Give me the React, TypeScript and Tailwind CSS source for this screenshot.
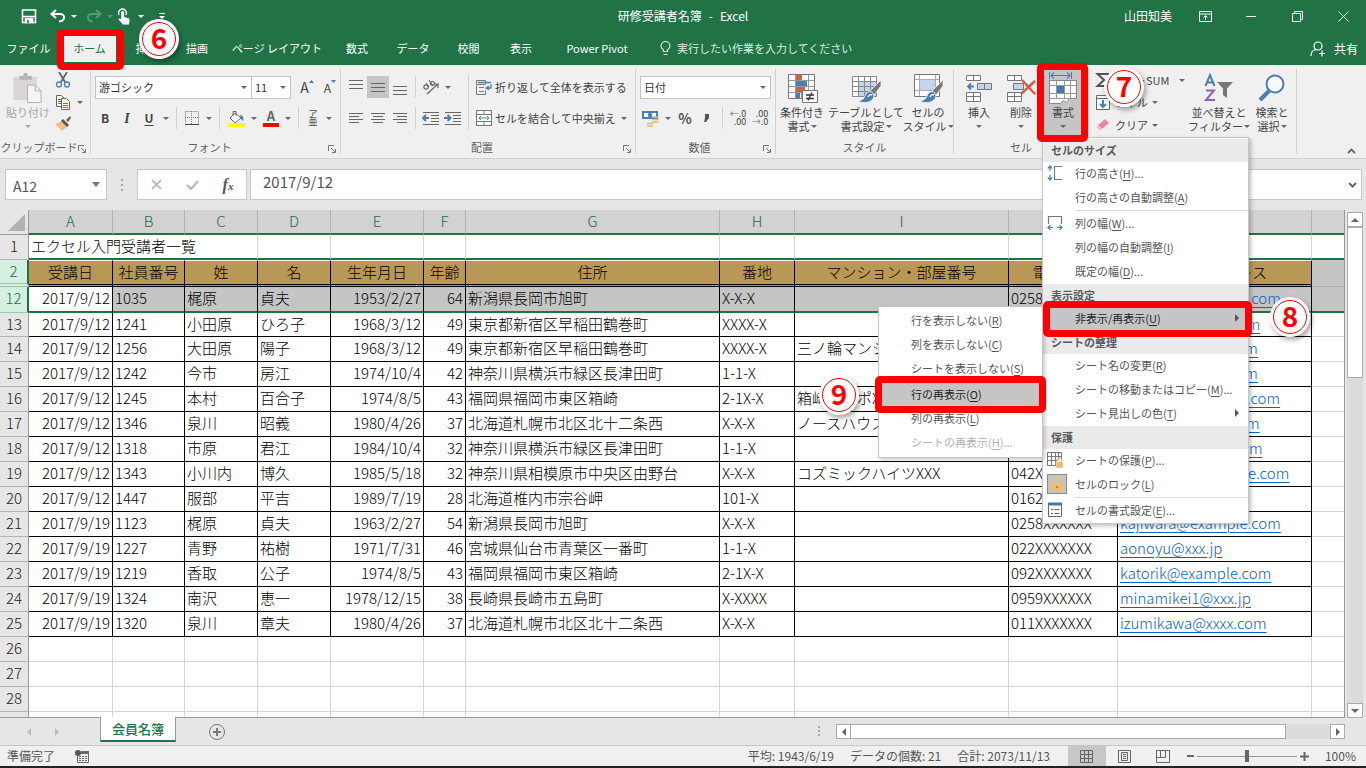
import { ReactNode } from "react";
import clsx from "clsx";

type Person = {
  row: number;
  date: string;
  id: string;
  last: string;
  first: string;
  birth: string;
  age: number;
  address: string;
  lot: string;
  building?: string;
  tel: string;
  mail: string;
};

const people: Person[] = [
  { row: 12, date: "2017/9/12", id: "1035", last: "梶原", first: "貞夫", birth: "1953/2/27", age: 64, address: "新潟県長岡市旭町", lot: "X-X-X", tel: "0258XXXXXX", mail: "kajiwara@example.com" },
  { row: 13, date: "2017/9/12", id: "1241", last: "小田原", first: "ひろ子", birth: "1968/3/12", age: 49, address: "東京都新宿区早稲田鶴巻町", lot: "XXXX-X", tel: "03XXXXXXXX", mail: "odawara@xxxxx.com" },
  { row: 14, date: "2017/9/12", id: "1256", last: "大田原", first: "陽子", birth: "1968/3/12", age: 49, address: "東京都新宿区早稲田鶴巻町", lot: "XXXX-X", building: "三ノ輪マンション", tel: "03XXXXXXXX", mail: "ootawara@xxxx.com" },
  { row: 15, date: "2017/9/12", id: "1242", last: "今市", first: "房江", birth: "1974/10/4", age: 42, address: "神奈川県横浜市緑区長津田町", lot: "1-1-X", tel: "045XXXXXXX", mail: "imaichi@xxxxxx.com" },
  { row: 16, date: "2017/9/12", id: "1245", last: "本村", first: "百合子", birth: "1974/8/5", age: 43, address: "福岡県福岡市東区箱崎", lot: "2-1X-X", building: "箱崎コーポX", tel: "092XXXXXXX", mail: "motomura@xxxxxx.com" },
  { row: 17, date: "2017/9/12", id: "1346", last: "泉川", first: "昭義", birth: "1980/4/26", age: 37, address: "北海道札幌市北区北十二条西", lot: "X-X-X", building: "ノースハウス", tel: "011XXXXXXX", mail: "izumikawa@xxx.com" },
  { row: 18, date: "2017/9/12", id: "1318", last: "市原", first: "君江", birth: "1984/10/4", age: 32, address: "神奈川県横浜市緑区長津田町", lot: "1-1-X", tel: "045XXXXXXX", mail: "ichihara@xxxxxx.com" },
  { row: 19, date: "2017/9/12", id: "1343", last: "小川内", first: "博久", birth: "1985/5/18", age: 32, address: "神奈川県相模原市中央区由野台", lot: "X-X-X", building: "コズミックハイツXXX", tel: "042XXXXXXX", mail: "ogawachi@example.com" },
  { row: 20, date: "2017/9/12", id: "1447", last: "服部", first: "平吉", birth: "1989/7/19", age: 28, address: "北海道椎内市宗谷岬", lot: "101-X", tel: "0162XXXXXX", mail: "hattori@xxx.jp" },
  { row: 21, date: "2017/9/19", id: "1123", last: "梶原", first: "貞夫", birth: "1963/2/27", age: 54, address: "新潟県長岡市旭町", lot: "X-X-X", tel: "0258XXXXXX", mail: "kajiwara@example.com" },
  { row: 22, date: "2017/9/19", id: "1227", last: "青野", first: "祐樹", birth: "1971/7/31", age: 46, address: "宮城県仙台市青葉区一番町", lot: "1-1-X", tel: "022XXXXXXX", mail: "aonoyu@xxx.jp" },
  { row: 23, date: "2017/9/19", id: "1219", last: "香取", first: "公子", birth: "1974/8/5", age: 43, address: "福岡県福岡市東区箱崎", lot: "2-1X-X", tel: "092XXXXXXX", mail: "katorik@example.com" },
  { row: 24, date: "2017/9/19", id: "1324", last: "南沢", first: "恵一", birth: "1978/12/15", age: 38, address: "長崎県長崎市五島町", lot: "X-XXXX", tel: "0959XXXXXX", mail: "minamikei1@xxx.jp" },
  { row: 25, date: "2017/9/19", id: "1320", last: "泉川", first: "章夫", birth: "1980/4/26", age: 37, address: "北海道札幌市北区北十二条西", lot: "X-X-X", tel: "011XXXXXXX", mail: "izumikawa@xxxx.com" },
];

const headings = ["受講日", "社員番号", "姓", "名", "生年月日", "年齢", "住所", "番地", "マンション・部屋番号", "電話番号", "メールアドレス"];
const letters = ["A", "B", "C", "D", "E", "F", "G", "H", "I", "J", "K", ""];

/* ---------- small parts ---------- */

function Caret({ className }: { className?: string }) {
  return (
    <svg viewBox="0 0 6 3" className={clsx("h-[3px] w-[6px] shrink-0", className)} fill="currentColor" aria-hidden="true">
      <path d="M0 0h6L3 3z" />
    </svg>
  );
}

function Sep({ className = "h-[22px]" }: { className?: string }) {
  return <span className={clsx("mx-1 w-px shrink-0 bg-[#d0d0d0]", className)} />;
}

function Tool({ label, children, active, className = "w-[22px]" }: { label: string; children: ReactNode; active?: boolean; className?: string }) {
  return (
    <button aria-label={label} className={clsx("flex h-[22px] shrink-0 items-center justify-center", active && "bg-[#c5c5c5]", className)}>
      {children}
    </button>
  );
}

function Drop({ label }: { label: string }) {
  return (
    <Tool label={label} className="w-3 text-[#666]">
      <Caret />
    </Tool>
  );
}

function Badge({ n, className }: { n: number; className: string }) {
  return (
    <span className={clsx("absolute z-30 flex size-10 items-center justify-center rounded-full bg-white shadow-[2px_3px_5px_rgba(0,0,0,0.35)]", className)}>
      <span className="flex size-[34px] items-center justify-center rounded-full border border-[#ff0000] bg-white pb-1 text-[28px] leading-none font-bold text-[#ff0000]">
        {n}
      </span>
    </span>
  );
}

function Frame({ className }: { className: string }) {
  return <span className={clsx("pointer-events-none absolute z-20 rounded-[5px] border-[7px] border-[#ff0000]", className)} />;
}

function Group({ label, launcher, className, children }: { label: string; launcher?: boolean; className?: string; children: ReactNode }) {
  return (
    <section aria-label={label} className={clsx("flex shrink-0 py-1", className)}>
      <div className="flex min-w-0 flex-1 flex-col">
        <div className="flex min-h-0 flex-1">{children}</div>
        <div className="flex h-[14px] items-center text-center text-[11px] leading-[14px] whitespace-nowrap text-[#5f5f5f]">
          <span className="flex-1">{label}</span>
          {launcher && (
            <button aria-label={`${label}の設定`} className="mt-1 mr-1">
              <svg viewBox="0 0 8 8" className="size-2" fill="none" stroke="#777">
                <path d="M.5 6V.5H6M3 3l4 4M7.500 4v3.500H4" />
              </svg>
            </button>
          )}
        </div>
      </div>
      <span className="w-px bg-[#d0d0d0]" />
    </section>
  );
}

function BigButton({ icon, lines, className, muted }: { icon: ReactNode; lines: string[]; className: string; muted?: boolean }) {
  return (
    <button className={clsx("flex h-[67px] shrink-0 flex-col items-center pt-1 text-[11px] leading-[14px] whitespace-nowrap", muted ? "text-[#a6a6a6]" : "text-[#444]", className)}>
      <span className="mb-0.5 flex h-[30px] items-center">{icon}</span>
      <span>{lines[0]}</span>
      <span className="flex h-[14px] items-center gap-px">
        {lines[1]}
        <Caret className={muted ? "" : "text-[#666]"} />
      </span>
    </button>
  );
}

/* ---------- icons ---------- */

function AlignIcon({ rows, short }: { rows: number[]; short?: "left" | "center" | "right" }) {
  return (
    <svg viewBox="0 0 16 16" className="size-4" stroke="#666">
      {rows.map((y, i) => {
        const cut = short && i % 2 === 1 ? 4 : 0;
        const x1 = short === "left" ? 1 : short === "right" ? 1 + cut : 1 + cut / 2;
        return <line key={y} x1={x1} x2={x1 + 14 - cut} y1={y + 0.5} y2={y + 0.5} />;
      })}
    </svg>
  );
}

function IndentIcon({ flip }: { flip?: boolean }) {
  return (
    <svg viewBox="0 0 18 14" className="h-[14px] w-[18px]" fill="none" stroke="#666">
      <path d="M1 1.500h16M9 4.500h8M9 7.500h8M9 10.500h8M1 13.500h16" />
      {flip ? <path d="M0 7h6M3.500 4l3 3-3 3" stroke="#4a7fb5" strokeWidth="2" /> : <path d="M7 7H1M4 4L1 7l3 3" stroke="#4a7fb5" strokeWidth="2" />}
    </svg>
  );
}

function Brush() {
  return (
    <>
      <path d="M30 7L19 18l4 4 7-9z" fill="#7a7a7a" stroke="#f0f0f0" strokeWidth=".8" />
      <path d="M21 19c-4-1-6 1-7 4s-3 4-7 5c5 3 15 2 16-5z" fill="#4a7fb5" stroke="#f0f0f0" strokeWidth=".8" />
      <path d="M17 24c1-2 2-3 4-2" stroke="#fff" strokeWidth="1.500" fill="none" />
    </>
  );
}

function CondIcon() {
  return (
    <svg viewBox="0 0 31 30" className="h-[30px] w-[31px]">
      <path d="M1.500 1.500h26v24h-26z" fill="#fff" stroke="#777" />
      <path d="M8.500 2v23M14.500 2v23M21.500 2v23M2 7.500h25M2 13.500h25M2 19.500h25" stroke="#999" />
      <path d="M9 2h6v5H9zM9 14h9v5H9z" fill="#d35f3f" />
      <path d="M9 8h11v5H9zM9 20h4v5H9z" fill="#4a7fb5" />
      <path d="M15.500 17.500h15v12h-15z" fill="#fff" stroke="#777" />
      <path d="M19 22h8M19 25.500h8M25 19.500l-4 8" stroke="#333" strokeWidth="1.300" />
    </svg>
  );
}

function TableIcon() {
  return (
    <svg viewBox="0 0 31 30" className="h-[30px] w-[31px]">
      <path d="M1 3h25v20H1z" fill="#fff" />
      <path d="M7 8h19v15H7z" fill="#c3d5ea" />
      <path d="M1.500 3.500h24v20h-24zM7.500 3v20M13.500 3v20M19.500 3v20M1 8.500h25M1 13.500h25M1 18.500h25" fill="none" stroke="#888" />
      <Brush />
    </svg>
  );
}

function StyleIcon() {
  return (
    <svg viewBox="0 0 31 30" className="h-[30px] w-[31px]">
      <path d="M1.500 1.500h25v22h-25z" fill="#fff" stroke="#777" />
      <path d="M6.500 2v21M22.500 2v21M2 6.500h24M2 17.500h24" stroke="#aaa" />
      <path d="M7 7h15v10H7z" fill="#c3d5ea" />
      <Brush />
    </svg>
  );
}

function InsertIcon() {
  return (
    <svg viewBox="0 0 28 28" className="size-7" fill="#fff" stroke="#777">
      <path d="M1.500 1.500h14v5h-14zM8.500 1.500v5M1.500 18.500h14v9h-14zM8.500 18.500v9M1.500 22.500h14" />
      <path d="M12.500 9.500h14v6h-14zM19.500 9.500v6" fill="#c3d5ea" />
      <path d="M9 12.500H3M6 9.500l-3 3 3 3" fill="none" stroke="#4a7fb5" strokeWidth="1.800" />
    </svg>
  );
}

function DeleteIcon() {
  return (
    <svg viewBox="0 0 30 28" className="h-7 w-[30px]" fill="#fff" stroke="#777">
      <path d="M1.500 1.500h14v5h-14zM8.500 1.500v5M1.500 18.500h14v9h-14zM8.500 18.500v9M1.500 22.500h14" />
      <path d="M7.500 9.500h10v6h-10z" fill="#c3d5ea" />
      <path d="M16 6l13 14M29 7L15 20" stroke="#d35f3f" strokeWidth="2.400" />
    </svg>
  );
}

function FormatIcon() {
  return (
    <svg viewBox="0 0 28 32" className="h-8 w-7">
      <path d="M.5 0v7M22.500 0v7" stroke="#4a7fb5" />
      <path d="M2 3.500h19M5 .5l-3 3 3 3M18 .5l3 3-3 3" fill="none" stroke="#4a7fb5" strokeWidth="1.200" />
      <path d="M.5 8.500h27v18h-7l-3 4-3-2-3 3H.5z" fill="#fff" stroke="#888" />
      <path d="M7.500 9v17M15.500 9v17M21.500 9v17M1 13.500h26M1 21.500h26M1 26.500h19" stroke="#999" fill="none" />
      <path d="M8 14h7v7H8z" fill="#3f78b5" />
    </svg>
  );
}

function SortIcon() {
  return (
    <svg viewBox="0 0 30 30" className="size-[30px]" fill="none">
      <path d="M1.500 13L6 2l4.500 11M3 9.500h6" stroke="#4a7fb5" strokeWidth="2" />
      <path d="M2 17.500h8L2 27h9" stroke="#8d62b8" strokeWidth="2" />
      <path d="M13 9h16l-6 6.500V25l-4-3v-6.500z" fill="#777" />
    </svg>
  );
}

function FindIcon() {
  return (
    <svg viewBox="0 0 28 28" className="size-7" fill="none" stroke="#4a7fb5">
      <circle cx="17" cy="10" r="8.500" strokeWidth="2" fill="#fafafa" />
      <path d="M11 17l-9 9" strokeWidth="4" />
    </svg>
  );
}

function PasteIcon() {
  return (
    <svg viewBox="0 0 30 32" className="h-[31px] w-[30px]">
      <path d="M0 4h24v24H0z" fill="#d9d5d9" />
      <path d="M6 7V3h4l1-3h3l1 3h4v4z" fill="#b5b5b5" />
      <path d="M14.500 12.500h8l6 6v12h-14z" fill="#f6f4f8" stroke="#b0b0b0" />
      <path d="M22.500 12.500v6h6" fill="none" stroke="#b0b0b0" />
    </svg>
  );
}

/* ---------- title bar and tabs ---------- */

function TitleBar() {
  return (
    <header className="grid h-8 grid-cols-[1fr_auto_1fr] items-center text-white">
      <div className="flex items-center pl-[21px]">
        <button aria-label="上書き保存">
          <svg viewBox="0 0 16 16" className="size-4" fill="none" stroke="#fff" strokeWidth="1.600">
            <path d="M1.500 2h13v12.500h-13zM1.500 8.500h13" />
            <path d="M4.500 10.500h7v4h-7z" fill="#fff" />
            <path d="M7 12v3" stroke="#217346" />
          </svg>
        </button>
        <button aria-label="元に戻す" className="ml-[13px] flex items-center gap-[5px]">
          <svg viewBox="0 0 16 14" className="h-[14px] w-4" fill="none" stroke="#fff" strokeWidth="2">
            <path d="M6 1L1.500 5 6 9M2 5h8c6 0 5 7-1 7.500" />
          </svg>
          <Caret />
        </button>
        <button aria-label="やり直し" className="ml-[9px] flex items-center gap-[5px] text-[#5b9a78]">
          <svg viewBox="0 0 16 14" className="h-[14px] w-4" fill="none" stroke="currentColor" strokeWidth="2">
            <path d="M10 1l4.500 4L10 9M14 5H6C0 5 1 12 7 12.500" />
          </svg>
          <Caret />
        </button>
        <button aria-label="タッチ/マウス モード" className="ml-1 flex items-center gap-[7px]">
          <svg viewBox="0 0 14 17" className="h-[17px] w-[14px]">
            <path d="M2 7a4 4 0 1 1 7 0" fill="none" stroke="#fff" strokeWidth="1.400" />
            <path d="M4.200 4.500a1.500 1.500 0 0 1 3 0V9l4.300 1.200c1 .3 1 1 1 2L12 16.500H6L1.500 11.500c0-1.500 1.500-1 2.700 0z" fill="#fff" />
          </svg>
          <Caret />
        </button>
        <button aria-label="クイック アクセス ツール バーのユーザー設定" className="ml-[15px] flex flex-col items-center gap-0.5">
          <span className="h-px w-[6px] bg-white" />
          <Caret />
        </button>
      </div>
      <h1 className="flex gap-[7px] text-[12px]">
        <span>研修受講者名簿</span>
        <span>-</span>
        <span>Excel</span>
      </h1>
      <div className="flex items-center justify-end">
        <span className="pr-[10px] text-[12px]">山田知美</span>
        <button aria-label="リボンの表示オプション" className="flex w-[46px] justify-center">
          <svg viewBox="0 0 13 11" className="h-[11px] w-[13px]" fill="none" stroke="#fff">
            <path d="M.5.5h12v10H.5zM.5 3h12M6.500 9V5M4.500 6.500l2-2 2 2" />
          </svg>
        </button>
        <button aria-label="最小化" className="flex w-[46px] justify-center">
          <span className="h-px w-[10px] bg-white" />
        </button>
        <button aria-label="元に戻す (縮小)" className="flex w-[46px] justify-center">
          <svg viewBox="0 0 11 11" className="size-[11px]" fill="none" stroke="#fff">
            <path d="M.5 2.500h8v8h-8zM2.500 2.500v-2h8v8h-2" />
          </svg>
        </button>
        <button aria-label="閉じる" className="flex w-[46px] justify-center">
          <svg viewBox="0 0 11 11" className="size-[11px]" fill="none" stroke="#fff">
            <path d="M.5.5l10 10M10.500.5l-10 10" />
          </svg>
        </button>
      </div>
    </header>
  );
}

const tabs = [
  { name: "挿入", width: "w-[49px]" },
  { name: "描画", width: "w-[52px]" },
  { name: "ページ レイアウト", width: "w-[108px]" },
  { name: "数式", width: "w-[52px]" },
  { name: "データ", width: "w-[60px]" },
  { name: "校閲", width: "w-[51px]" },
  { name: "表示", width: "w-[54px]" },
  { name: "Power Pivot", width: "w-[98px]" },
];

function TabBar() {
  return (
    <nav className="relative flex h-[33px] items-center text-[11px] whitespace-nowrap text-white">
      <button className="w-[57px]">ファイル</button>
      <button className="relative flex h-full w-[65px] items-center justify-center">
        <span className="flex h-[26px] w-[53px] items-center justify-center bg-[#f0f0f0] text-[#217346]">ホーム</span>
        <Frame className="-top-[3px] left-0 h-[41px] w-[67px]" />
      </button>
      {tabs.map((t) => (
        <button key={t.name} className={t.width}>
          {t.name}
        </button>
      ))}
      <button className="ml-[14px] flex items-center gap-[6px] text-[#dcebe2]">
        <svg viewBox="0 0 11 15" className="h-[15px] w-[11px]" fill="none" stroke="currentColor" strokeWidth="1.200">
          <path d="M3.500 10.500V9C1.500 7.500 1 6.500 1 5a4.500 4.500 0 0 1 9 0c0 1.500-.5 2.500-2.500 4v1.500zM3.500 13.500h4" />
        </svg>
        実行したい作業を入力してください
      </button>
      <button className="mr-2 ml-auto flex items-center gap-2">
        <svg viewBox="0 0 16 16" className="size-4" fill="none" stroke="#fff" strokeWidth="1.200">
          <circle cx="8" cy="5" r="4" />
          <path d="M1 15c0-4 2-6 5-6.500M9 12.500h6M12 9.500v6" />
        </svg>
        <span className="text-[12px]">共有</span>
      </button>
      <Badge n={6} className="-top-[13px] left-[139px]" />
    </nav>
  );
}

/* ---------- format menu ---------- */

function Accel({ text, letter, tail = "" }: { text: string; letter: string; tail?: string }) {
  return (
    <span className="whitespace-nowrap">
      {text}(<u className="underline-offset-2">{letter}</u>){tail}
    </span>
  );
}

type ItemProps = { text: string; letter: string; tail?: string; icon?: ReactNode; arrow?: boolean; on?: boolean; disabled?: boolean; children?: ReactNode };

function Item({ text, letter, tail, icon, arrow, on, disabled, children }: ItemProps) {
  return (
    <div className="relative">
      <button role="menuitem" disabled={disabled} className={clsx("flex h-6 w-full items-center pb-0.5 text-left", on && "bg-[#c5c5c5] text-[#262626]", disabled && "text-[#b0b0b0]")}>
        <span className="flex w-8 shrink-0 items-center pl-1">{icon}</span>
        <Accel text={text} letter={letter} tail={tail} />
        {arrow && (
          <svg viewBox="0 0 4 8" className="mr-[9px] ml-auto h-2 w-1" fill="#555">
            <path d="M0 0l4 4-4 4z" />
          </svg>
        )}
      </button>
      {children}
    </div>
  );
}

function MenuHead({ children }: { children: ReactNode }) {
  return <div className="flex h-[23px] items-center bg-[#eaeaea] pl-2 font-bold text-[#5a5a5a]">{children}</div>;
}

function MenuLine() {
  return <div className="ml-8 h-0.5 border-t border-[#dcdcdc]" />;
}

function HideMenu() {
  return (
    <div role="menu" className="absolute -top-px right-full z-10 w-[165px] border border-[#c6c6c6] bg-white py-[2px] shadow-[2px_2px_4px_rgba(0,0,0,0.2)]">
      <Item text="行を表示しない" letter="R" />
      <Item text="列を表示しない" letter="C" />
      <Item text="シートを表示しない" letter="S" />
      <MenuLine />
      <Item text="行の再表示" letter="O" on>
        <Frame className="-inset-x-1 -top-[7px] h-[37px]" />
        <Badge n={9} className="-top-2 -left-[60px]" />
      </Item>
      <Item text="列の再表示" letter="L" />
      <Item text="シートの再表示" letter="H" tail="..." disabled />
    </div>
  );
}

function FormatMenu() {
  return (
    <div role="menu" className="absolute top-[68px] left-0 z-10 w-[207px] border border-[#c6c6c6] bg-white pt-px text-[11px] text-[#555] shadow-[2px_2px_4px_rgba(0,0,0,0.25)]">
      <MenuHead>セルのサイズ</MenuHead>
      <Item
        text="行の高さ"
        letter="H"
        tail="..."
        icon={
          <svg viewBox="0 0 16 16" className="size-4" fill="none" stroke="#4a7fb5" strokeWidth="1.200">
            <path d="M3 1v5M3 10v5M.8 3.500L3 1l2.200 2.500M.8 12.500L3 15l2.200-2.500" />
            <path d="M15.500 1.500h-8v13h8" stroke="#777" />
          </svg>
        }
      />
      <Item text="行の高さの自動調整" letter="A" />
      <MenuLine />
      <Item
        text="列の幅"
        letter="W"
        tail="..."
        icon={
          <svg viewBox="0 0 16 16" className="size-4" fill="none" stroke="#4a7fb5" strokeWidth="1.200">
            <path d="M1 12.500h5M10 12.500h5M3.500 10.200L1 12.500l2.500 2.300M12.500 10.200l2.500 2.300-2.500 2.300" />
            <path d="M1.500 9V1.500h13V9" stroke="#777" />
          </svg>
        }
      />
      <Item text="列の幅の自動調整" letter="I" />
      <Item text="既定の幅" letter="D" tail="..." />
      <MenuHead>表示設定</MenuHead>
      <Item text="非表示/再表示" letter="U" arrow on>
        <HideMenu />
        <Frame className="-right-1 left-0 -top-[6px] h-[36px]" />
        <Badge n={8} className="-top-[10px] left-[227px]" />
      </Item>
      <MenuHead>シートの整理</MenuHead>
      <Item text="シート名の変更" letter="R" />
      <Item text="シートの移動またはコピー" letter="M" tail="..." />
      <Item text="シート見出しの色" letter="T" arrow />
      <MenuHead>保護</MenuHead>
      <Item
        text="シートの保護"
        letter="P"
        tail="..."
        icon={
          <svg viewBox="0 0 16 16" className="size-4" fill="none" stroke="#777">
            <path d="M.5.5h14v13H.5zM4.500.5v13M8.500.5v13M11.500.5v7M.5 4.500h14M.5 8.500h10" />
            <path d="M9 9.500h7V16H9z" fill="#e8b968" stroke="#fff" strokeWidth=".5" />
            <path d="M10.500 9.500V8a2 2 0 0 1 4 0v1.500" stroke="#e8b968" strokeWidth="1.200" />
          </svg>
        }
      />
      <Item
        text="セルのロック"
        letter="L"
        icon={
          <span className="flex size-5 items-center justify-center border border-[#8a8a8a] bg-[#c5c5c5]">
            <svg viewBox="0 0 14 14" className="size-[14px]">
              <path d="M1 6h12v8H1z" fill="#eebf70" />
              <path d="M3.500 7V4a3.500 3.500 0 0 1 7 0v3" fill="none" stroke="#eebf70" strokeWidth="1.800" />
              <circle cx="7" cy="10" r="1.200" fill="#b58a45" />
            </svg>
          </span>
        }
      />
      <MenuLine />
      <Item
        text="セルの書式設定"
        letter="E"
        tail="..."
        icon={
          <svg viewBox="0 0 16 16" className="size-4" fill="none" stroke="#666">
            <path d="M1.500 1.500h13v13h-13z" fill="#fff" />
            <path d="M1 2h14" stroke="#3f78b5" strokeWidth="3" />
            <path d="M7.500 7.500h5M7.500 11.500h5M4 7.500h2M4 11.500h2" />
          </svg>
        }
      />
    </div>
  );
}

/* ---------- ribbon ---------- */

function Combo({ label, value, className }: { label: string; value: string; className: string }) {
  return (
    <span className={clsx("relative block h-[23px] border border-[#c3c3c3] bg-white", className)}>
      <select aria-label={label} className="block h-full w-full appearance-none pl-[3px] text-[11px] leading-[19px] text-[#333]">
        <option>{value}</option>
      </select>
      <Caret className="pointer-events-none absolute top-[9px] right-1 text-[#666]" />
    </span>
  );
}

function Ribbon() {
  return (
    <div className="flex h-[94px] border-b border-[#d0d0d0] bg-[#f0f0f0] text-[#444]">
      <Group label="クリップボード" launcher className="w-[91px]">
        <BigButton muted className="w-[52px] pl-1" lines={["貼り付け", ""]} icon={<PasteIcon />} />
        <div className="flex flex-col">
          <Tool label="切り取り">
            <svg viewBox="0 0 16 16" className="size-4" fill="none" stroke="#666" strokeWidth="1.800">
              <path d="M4 0l6 10M12 0L6 10" />
              <circle cx="4" cy="12.500" r="2.500" stroke="#4a7fb5" strokeWidth="1.300" />
              <circle cx="12" cy="12.500" r="2.500" stroke="#4a7fb5" strokeWidth="1.300" />
            </svg>
          </Tool>
          <div className="flex">
            <Tool label="コピー">
              <svg viewBox="0 0 16 15" className="h-[15px] w-4" fill="#fff" stroke="#666">
                <path d="M1.500.5h5l3 3v8h-8z" />
                <path d="M3 4.500h4M3 6.500h4M3 8.500h4" stroke="#4a7fb5" />
                <path d="M6.500 3.500h5l3 3v8h-8z" />
                <path d="M8 8.500h5M8 10.500h5M8 12.500h5" stroke="#4a7fb5" />
              </svg>
            </Tool>
            <Drop label="コピーのオプション" />
          </div>
          <Tool label="書式のコピー/貼り付け">
            <svg viewBox="0 0 16 16" className="size-4">
              <path d="M0 8l7-3 5 6-5 4z" fill="#eec081" />
              <path d="M6 5l2-2 6 6-2 2z" fill="#555" />
              <path d="M11 4l4-4 1 2-3 4z" fill="#666" />
            </svg>
          </Tool>
        </div>
      </Group>

      <Group label="フォント" launcher className="w-[250px]">
        <div className="flex flex-col gap-2 pt-[7px] pl-[3px]">
          <div className="flex items-center">
            <Combo label="フォント" value="游ゴシック" className="ml-px w-[157px]" />
            <Combo label="フォント サイズ" value="11" className="-ml-px w-10" />
            <Tool label="フォント サイズの拡大" className="ml-1 w-6">
              <span className="text-[14px]">A</span>
              <svg viewBox="0 0 5 3" className="mb-3 h-[3px] w-[5px]" fill="#4a7fb5">
                <path d="M0 3h5L2.500 0z" />
              </svg>
            </Tool>
            <Tool label="フォント サイズの縮小">
              <span className="text-[12px]">A</span>
              <svg viewBox="0 0 5 3" className="mb-3 h-[3px] w-[5px]" fill="#4a7fb5">
                <path d="M0 0h5L2.500 3z" />
              </svg>
            </Tool>
          </div>
          <div className="flex items-center">
            <Tool label="太字">
              <b className="text-[12px]">B</b>
            </Tool>
            <Tool label="斜体">
              <i className="font-['Liberation_Serif',serif] text-[14px] font-bold">I</i>
            </Tool>
            <Tool label="下線">
              <u className="text-[12px] font-bold underline-offset-2">U</u>
            </Tool>
            <Drop label="下線の種類" />
            <Sep />
            <Tool label="罫線">
              <svg viewBox="0 0 14 14" className="size-[14px]" fill="none" stroke="#777">
                <path d="M.5.5h13v12M.5.5v12M6.500 0v13M0 6.500h14" strokeDasharray="1 1" />
                <path d="M0 13.500h14" stroke="#444" />
              </svg>
            </Tool>
            <Drop label="罫線の種類" />
            <Sep />
            <Tool label="塗りつぶしの色" className="w-6">
              <svg viewBox="0 0 17 17" className="size-[17px]">
                <path d="M7 3l6 5-6 5-5-5z" fill="#fff" stroke="#666" />
                <path d="M5 6V1.500h3V6" fill="none" stroke="#666" />
                <path d="M12 5c3 0 4 3 3 6l-2-2z" fill="#4a7fb5" />
                <path d="M0 13h17v4H0z" fill="#ffff00" />
              </svg>
            </Tool>
            <Drop label="塗りつぶしの色一覧" />
            <Tool label="フォントの色">
              <span className="flex h-[17px] w-4 items-center justify-center border-b-4 border-[#ff0000] pb-px text-[13px] leading-none font-bold text-[#666]">A</span>
            </Tool>
            <Drop label="フォントの色一覧" />
            <Sep />
            <Tool label="ふりがなの表示" className="w-5">
              <span className="flex flex-col text-center text-[9px] leading-[8px]">
                <span>ア</span>
                <span>亜</span>
              </span>
            </Tool>
            <Drop label="ふりがなの設定" />
          </div>
        </div>
      </Group>

      <Group label="配置" launcher className="w-[295px]">
        <div className="flex flex-col gap-[9px] pt-[7px] pl-1">
          <div className="flex">
            <Tool label="上揃え"><AlignIcon rows={[1, 5, 9]} /></Tool>
            <Tool label="上下中央揃え" active><AlignIcon rows={[4, 8, 12]} /></Tool>
            <Tool label="下揃え"><AlignIcon rows={[7, 11, 15]} /></Tool>
            <Sep />
            <Tool label="方向">
              <svg viewBox="0 0 18 16" className="h-4 w-[18px]" fill="none" stroke="#666" strokeWidth="1.200">
                <circle cx="4" cy="8" r="2.200" />
                <path d="M4 4l3 4M7 1l4 6M5 15L16 5M16 9V5h-4" />
                <circle cx="10.500" cy="4.500" r="2" />
              </svg>
            </Tool>
            <Drop label="方向の種類" />
          </div>
          <div className="flex">
            <Tool label="左揃え"><AlignIcon rows={[3, 6, 9, 12]} short="left" /></Tool>
            <Tool label="中央揃え"><AlignIcon rows={[3, 6, 9, 12]} short="center" /></Tool>
            <Tool label="右揃え"><AlignIcon rows={[3, 6, 9, 12]} short="right" /></Tool>
            <Sep />
            <Tool label="インデントを減らす"><IndentIcon /></Tool>
            <Tool label="インデントを増やす"><IndentIcon flip /></Tool>
          </div>
        </div>
        <Sep className="mt-[6px] h-[55px]" />
        <div className="flex flex-col gap-[9px] pt-[7px] pl-[3px] text-[11px]">
          <button className="flex h-[22px] items-center gap-[3px] whitespace-nowrap">
            <svg viewBox="0 0 16 15" className="h-[15px] w-4" fill="none" stroke="#777">
              <path d="M.5.500h9v4h-9zM.5 5.500v9h9v-4M3 7.500h5M3 11.500h5" />
              <path d="M2 2.500h13M15 4v4h-4M13 6l-3 2 3 2" stroke="#4a7fb5" strokeWidth="1.300" />
            </svg>
            折り返して全体を表示する
          </button>
          <button className="flex h-[22px] items-center gap-[3px] whitespace-nowrap">
            <svg viewBox="0 0 16 16" className="size-4" fill="#fff" stroke="#777">
              <path d="M.5.5h15v15H.5zM.5 4.500h15M.5 11.500h15M8 .5v4M8 11.500v4" />
              <path d="M3 8h10M5 6L3 8l2 2M11 6l2 2-2 2" stroke="#4a7fb5" fill="none" />
            </svg>
            セルを結合して中央揃え
            <Caret className="ml-0.5 text-[#666]" />
          </button>
        </div>
      </Group>

      <Group label="数値" launcher className="w-[140px]">
        <div className="flex flex-col gap-2 pt-[7px] pl-1">
          <Combo label="表示形式" value="日付" className="w-[131px]" />
          <div className="flex items-center">
            <Tool label="通貨表示形式">
              <svg viewBox="0 0 18 17" className="h-[17px] w-[18px]">
                <path d="M0 1h16v8H0z" fill="#4a7fb5" />
                <path d="M2 3h12v4H2z" fill="#fff" />
                <circle cx="8" cy="5" r="2.200" fill="#4a7fb5" />
                <path d="M10 7h7M10 9.500h7M10 12h7M5 13.500h6M5 16h6" stroke="#e6b96f" strokeWidth="1.700" />
              </svg>
            </Tool>
            <Drop label="通貨の種類" />
            <Tool label="パーセント スタイル"><span className="text-[14px] font-bold text-[#555]">%</span></Tool>
            <Tool label="桁区切りスタイル">
              <svg viewBox="0 0 6 9" className="h-[9px] w-[6px]" fill="#555">
                <path d="M1 0h4v4L2 8H0l1-4z" />
              </svg>
            </Tool>
            <Sep />
            <Tool label="小数点以下の表示桁数を増やす">
              <span className="text-right text-[9px] leading-[8px]"><span className="text-[#4a7fb5]">←</span>.0<br />.00</span>
            </Tool>
            <Tool label="小数点以下の表示桁数を減らす">
              <span className="text-right text-[9px] leading-[8px]">.00<br /><span className="text-[#4a7fb5]">→</span>.0</span>
            </Tool>
          </div>
        </div>
      </Group>

      <Group label="スタイル" className="w-[178px]">
        <BigButton className="ml-px w-[50px]" lines={["条件付き", "書式"]} icon={<CondIcon />} />
        <BigButton className="w-[78px]" lines={["テーブルとして", "書式設定"]} icon={<TableIcon />} />
        <BigButton className="w-[46px]" lines={["セルの", "スタイル"]} icon={<StyleIcon />} />
      </Group>

      <Group label="セル" className="w-[135px]">
        <BigButton className="ml-1 w-[42px]" lines={["挿入", ""]} icon={<InsertIcon />} />
        <BigButton className="w-[42px]" lines={["削除", ""]} icon={<DeleteIcon />} />
        <div className="relative">
          <BigButton className="w-[42px] bg-[#c5c5c5]" lines={["書式", ""]} icon={<FormatIcon />} />
          <FormatMenu />
          <Frame className="-top-[6px] -left-[5px] h-[79px] w-[51px]" />
          <Badge n={7} className="-top-[2px] left-[62px]" />
        </div>
      </Group>

      <Group label="編集" className="w-[208px]">
        <div className="flex w-[98px] flex-col pl-[6px] text-[11px]">
          <button className="flex h-[22px] items-center gap-[2px] whitespace-nowrap">
            <svg viewBox="0 0 16 16" className="size-4" fill="none" stroke="#555" strokeWidth="2">
              <path d="M14 4V2H2.500L9 8l-6.500 6H14v-2" />
            </svg>
            オートSUM
            <Caret className="ml-2 text-[#666]" />
          </button>
          <button className="flex h-[23px] items-center gap-1">
            <svg viewBox="0 0 16 16" className="size-4" fill="#fff" stroke="#666">
              <path d="M1.500.5h13v14h-13zM1.500 3.500h13" />
              <path d="M8 5v7M5 9l3 3 3-3" stroke="#4a7fb5" strokeWidth="2" fill="none" />
            </svg>
            フィル
            <Caret className="text-[#666]" />
          </button>
          <button className="flex h-[22px] items-center gap-1">
            <svg viewBox="0 0 16 16" className="size-4">
              <path d="M3 8l7-6 4 4-7 6z" fill="#e8899b" />
              <path d="M3 8l4 4-2 1.500-3.500-3.500z" fill="#f3b9c4" />
            </svg>
            クリア
            <Caret className="text-[#666]" />
          </button>
        </div>
        <BigButton className="w-[64px]" lines={["並べ替えと", "フィルター"]} icon={<SortIcon />} />
        <BigButton className="w-[42px]" lines={["検索と", "選択"]} icon={<FindIcon />} />
      </Group>

      <button aria-label="リボンを折りたたむ" className="mt-auto mr-[10px] mb-1 ml-auto">
        <svg viewBox="0 0 9 6" className="h-[6px] w-[9px]" fill="none" stroke="#666" strokeWidth="1.800">
          <path d="M1 5l3.500-3.500L8 5" />
        </svg>
      </button>
    </div>
  );
}

/* ---------- formula bar ---------- */

function FormulaBar() {
  return (
    <div className="flex h-[51px] items-start pt-[10px] pr-1 pl-[5px] text-[#555]">
      <div className="relative flex h-[31px] w-[102px] items-center border border-[#c6c6c6] bg-white">
        <input aria-label="名前ボックス" defaultValue="A12" className="w-full pt-1 pl-[7px] text-[14px] outline-none" />
        <svg viewBox="0 0 8 5" className="absolute top-3 right-[6px] h-[5px] w-2" fill="#777">
          <path d="M0 0h8L4 5z" />
        </svg>
      </div>
      <span className="mt-[10px] flex w-[30px] flex-col items-center gap-[3px]">
        <i className="size-0.5 bg-[#a6a6a6]" />
        <i className="size-0.5 bg-[#a6a6a6]" />
        <i className="size-0.5 bg-[#a6a6a6]" />
      </span>
      <div className="flex h-[31px] w-[110px] items-center border border-[#c6c6c6] bg-white">
        <button aria-label="キャンセル" className="flex flex-1 justify-center">
          <svg viewBox="0 0 11 11" className="size-[11px]" stroke="#bdbdbd" strokeWidth="1.800">
            <path d="M1 1l9 9M10 1l-9 9" />
          </svg>
        </button>
        <button aria-label="入力" className="flex flex-1 justify-center">
          <svg viewBox="0 0 13 10" className="h-[10px] w-[13px]" stroke="#bdbdbd" strokeWidth="2.400" fill="none">
            <path d="M1 5l4 4 7-8" />
          </svg>
        </button>
        <button aria-label="関数の挿入" className="flex-1 font-['Liberation_Serif',serif] text-[16px] leading-none font-bold italic">
          f<span className="text-[11px]">x</span>
        </button>
      </div>
      <div className="ml-[3px] flex h-[31px] flex-1 items-center border border-[#c6c6c6] bg-white">
        <input aria-label="数式バー" defaultValue="2017/9/12" className="min-w-0 flex-1 pb-1 pl-3 text-[15px] outline-none" />
        <svg viewBox="0 0 9 6" className="mr-1 h-[6px] w-[9px]" fill="none" stroke="#666" strokeWidth="2">
          <path d="M1 1l3.500 3.500L8 1" />
        </svg>
      </div>
    </div>
  );
}

/* ---------- sheet ---------- */

function RowHead({ n, selected, className }: { n: number | string; selected?: boolean; className?: string }) {
  return (
    <th
      scope="row"
      className={clsx(
        "border-r border-b p-0 text-center align-top font-light",
        selected ? "border-r-2 border-r-[#217346] border-b-[#9fc5b0] bg-[#d3f0e0] text-[#217346]" : "border-r-[#999] border-b-[#b5b5b5] bg-[#e6e6e6] text-[#222]",
        className
      )}
    >
      {n}
    </th>
  );
}

function PersonRow({ p }: { p: Person }) {
  const selected = p.row === 12;
  const cell = clsx("overflow-hidden border-r border-r-black px-[2px] py-0 align-top", selected ? "border-b-2 border-b-[#217346]" : "border-b border-b-black");
  const fill = selected ? "bg-[#c5c5c5]" : "bg-white";
  return (
    <tr className={p.row === 12 ? "h-[26px]" : p.row === 13 ? "h-6" : "h-[25px]"}>
      <RowHead n={p.row} selected={selected} />
      <td className={clsx(cell, "bg-white text-right")}>{p.date}</td>
      <td className={clsx(cell, fill)}>{p.id}</td>
      <td className={clsx(cell, fill)}>{p.last}</td>
      <td className={clsx(cell, fill)}>{p.first}</td>
      <td className={clsx(cell, fill, "text-right")}>{p.birth}</td>
      <td className={clsx(cell, fill, "text-right")}>{p.age}</td>
      <td className={clsx(cell, fill)}>{p.address}</td>
      <td className={clsx(cell, fill)}>{p.lot}</td>
      <td className={clsx(cell, fill)}>{p.building}</td>
      <td className={clsx(cell, fill)}>{p.tel}</td>
      <td className={clsx(cell, fill)}>
        <a href={`mailto:${p.mail}`} className="text-[#0563c1] underline underline-offset-[3px]">
          {p.mail}
        </a>
      </td>
      <td className={clsx("p-0", fill, selected ? "border-b-2 border-b-[#217346]" : "border-b border-b-[#d4d4d4]")} />
    </tr>
  );
}

function Sheet() {
  return (
    <div className="min-w-0 flex-1 overflow-hidden border-r border-b border-[#999] bg-white">
      <table className="w-full table-fixed border-separate border-spacing-0 text-[15px] leading-[22px] font-light whitespace-nowrap text-black">
        <colgroup>
          <col className="w-[29px]" />
          <col className="w-[84px]" />
          <col className="w-[72px]" />
          <col className="w-[73px]" />
          <col className="w-[73px]" />
          <col className="w-[93px]" />
          <col className="w-[42px]" />
          <col className="w-[254px]" />
          <col className="w-[75px]" />
          <col className="w-[214px]" />
          <col className="w-[109px]" />
          <col className="w-[194px]" />
          <col />
        </colgroup>
        <thead>
          <tr className="h-[25px]">
            <th aria-label="すべて選択" className="border-r border-b border-[#999] bg-[#e6e6e6] p-0">
              <svg viewBox="0 0 17 17" className="ml-2 size-[17px]" fill="#b2b2b2">
                <path d="M17 0v17H0z" />
              </svg>
            </th>
            {letters.map((l, i) => (
              <th key={i} scope="col" className="border-r border-b-2 border-r-[#b0b0b0] border-b-[#217346] bg-[#d2d2d2] p-0 align-top font-light text-[#1e6b45] last:border-r-0">
                {l}
              </th>
            ))}
          </tr>
        </thead>
        <tbody>
          <tr className="h-[25px]">
            <RowHead n={1} />
            <td colSpan={3} className="border-r border-b-2 border-r-[#d4d4d4] border-b-[#217346] px-[2px] py-0 align-top">
              エクセル入門受講者一覧
            </td>
            {letters.slice(3).map((_, i) => (
              <td key={i} className="border-r border-b-2 border-r-[#d4d4d4] border-b-[#217346] p-0 last:border-r-0" />
            ))}
          </tr>
          <tr className="h-[27px]">
            <RowHead n={2} selected className="border-b-4 border-double" />
            {headings.map((h) => (
              <td key={h} className="border-t border-r border-b-3 border-t-white border-r-black border-b-black [border-bottom-style:double] bg-[#b99755] p-0 text-center align-top">
                {h}
              </td>
            ))}
            <td className="border-b border-b-[#b0b0b0] bg-[#c5c5c5] p-0" />
          </tr>
          {people.map((p) => (
            <PersonRow key={p.row} p={p} />
          ))}
          {[26, 27, 28, ""].map((n) => (
            <tr key={n} className="h-[25px]">
              <RowHead n={n} />
              {letters.map((_, i) => (
                <td key={i} className="border-r border-b border-[#d4d4d4] p-0 last:border-r-0" />
              ))}
            </tr>
          ))}
        </tbody>
      </table>
    </div>
  );
}

function ScrollButton({ label, d, className }: { label: string; d: string; className: string }) {
  return (
    <button aria-label={label} className={clsx("flex shrink-0 items-center justify-center border border-[#ababab] bg-white", className)}>
      <svg viewBox="0 0 8 8" className="size-2" fill="#666">
        <path d={d} />
      </svg>
    </button>
  );
}

function BottomBar() {
  return (
    <div className="flex h-[28px] items-start border-b border-[#c6c6c6]">
      <div className="flex w-[100px] items-center gap-6 self-center pl-[27px]">
        <button aria-label="前のシート">
          <svg viewBox="0 0 4 8" className="h-2 w-1" fill="#bbb"><path d="M4 0v8L0 4z" /></svg>
        </button>
        <button aria-label="次のシート">
          <svg viewBox="0 0 4 8" className="h-2 w-1" fill="#bbb"><path d="M0 0v8l4-4z" /></svg>
        </button>
      </div>
      <button className="-mt-px h-[25px] w-[76px] border-x border-b-2 border-x-[#999] border-b-[#217346] bg-white text-[13px] leading-none font-medium text-[#217346]">会員名簿</button>
      <button aria-label="新しいシート" className="ml-8 self-center">
        <svg viewBox="0 0 18 18" className="size-[18px]" fill="none" stroke="#777">
          <circle cx="9" cy="9" r="7.500" />
          <path d="M9 5v8M5 9h8" strokeWidth="2" />
        </svg>
      </button>
      <span className="mt-2 mr-4 ml-auto flex flex-col gap-0.5">
        <i className="size-0.5 bg-[#aaa]" />
        <i className="size-0.5 bg-[#aaa]" />
        <i className="size-0.5 bg-[#aaa]" />
      </span>
      <div className="mt-[6px] mr-[21px] flex h-[15px] w-[38%] max-w-[509px] bg-[#dcdcdc]">
        <ScrollButton label="左へスクロール" d="M6 0v8L2 4z" className="w-[15px]" />
        <span className="-ml-px flex-1 border border-[#ababab] bg-white" />
        <ScrollButton label="右へスクロール" d="M2 0v8l4-4z" className="ml-[44px] w-[15px]" />
      </div>
    </div>
  );
}

function StatusBar() {
  return (
    <footer className="flex h-[20px] items-center bg-[#f0f0f0] text-[12px] whitespace-nowrap text-[#555]">
      <span className="pl-[7px]">準備完了</span>
      <button aria-label="マクロの記録" className="ml-5">
        <svg viewBox="0 0 14 13" className="h-[13px] w-[14px]" fill="none" stroke="#666">
          <path d="M2.500 6v6.500h11V2H6" />
          <path d="M6 2.500h8" strokeWidth="3" />
          <path d="M4 6.500h9M4 8.500h9M4 10.500h9" strokeDasharray="2 1" />
          <circle cx="3" cy="3" r="3" fill="#555" stroke="none" />
        </svg>
      </button>
      <div className="mr-[18px] ml-auto flex gap-4">
        <span>平均: 1943/6/19</span>
        <span>データの個数: 21</span>
        <span>合計: 2073/11/13</span>
      </div>
      <button aria-label="標準" className="flex h-full w-[38px] items-center justify-center bg-[#c8c8c8]">
        <svg viewBox="0 0 13 13" className="size-[13px]" fill="none" stroke="#666">
          <path d="M.5.5h12v12H.5zM4.500.5v12M8.500.5v12M.5 4.500h12M.5 8.500h12" />
        </svg>
      </button>
      <button aria-label="ページ レイアウト" className="flex w-[38px] justify-center">
        <svg viewBox="0 0 13 13" className="size-[13px]" fill="none" stroke="#666">
          <path d="M.5.5h12v12H.5zM3.500 2.500h6v8h-6zM5 4.500h3M5 6.500h3M5 8.500h3" />
        </svg>
      </button>
      <button aria-label="改ページ プレビュー" className="flex w-[38px] justify-center">
        <svg viewBox="0 0 14 13" className="h-[13px] w-[14px]" fill="none" stroke="#666">
          <path d="M.5.5h13v12H.5zM4.500.5v7M9.500.5v7M.5 7.500h9" />
        </svg>
      </button>
      <button aria-label="縮小" className="ml-[5px] flex h-full w-[10px] items-center">
        <span className="h-0.5 w-[7px] bg-[#666]" />
      </button>
      <input
        type="range"
        aria-label="ズーム"
        defaultValue={50}
        className="h-3 w-[100px] appearance-none bg-[linear-gradient(#999,#999)] bg-[length:100%_1px] bg-center bg-no-repeat [&::-webkit-slider-thumb]:h-3 [&::-webkit-slider-thumb]:w-1 [&::-webkit-slider-thumb]:appearance-none [&::-webkit-slider-thumb]:bg-[#666]"
      />
      <button aria-label="拡大" className="ml-[3px]">
        <svg viewBox="0 0 9 9" className="size-[9px]" stroke="#666" strokeWidth="2">
          <path d="M4.500 0v9M0 4.500h9" />
        </svg>
      </button>
      <span className="mr-[10px] ml-4">100%</span>
    </footer>
  );
}

export default function App() {
  return (
    <div className="flex h-screen flex-col overflow-hidden bg-[#e6e6e6] font-['Noto_Sans_CJK_JP',sans-serif]">
      <div className="bg-[#217346]">
        <TitleBar />
        <TabBar />
      </div>
      <div className="relative z-10">
        <Ribbon />
      </div>
      <FormulaBar />
      <main className="flex min-h-0 flex-1">
        <Sheet />
        <div className="mt-[2px] mr-[3px] ml-[2px] flex w-4 flex-col bg-[#dcdcdc]">
          <ScrollButton label="上へスクロール" d="M0 6h8L4 2z" className="h-[15px]" />
          <span className="h-[151px] border border-[#ababab] bg-white" />
          <ScrollButton label="下へスクロール" d="M0 2h8L4 6z" className="mt-auto h-[15px]" />
        </div>
      </main>
      <BottomBar />
      <StatusBar />
      <div className="h-0.5 bg-[#222]" />
    </div>
  );
}
